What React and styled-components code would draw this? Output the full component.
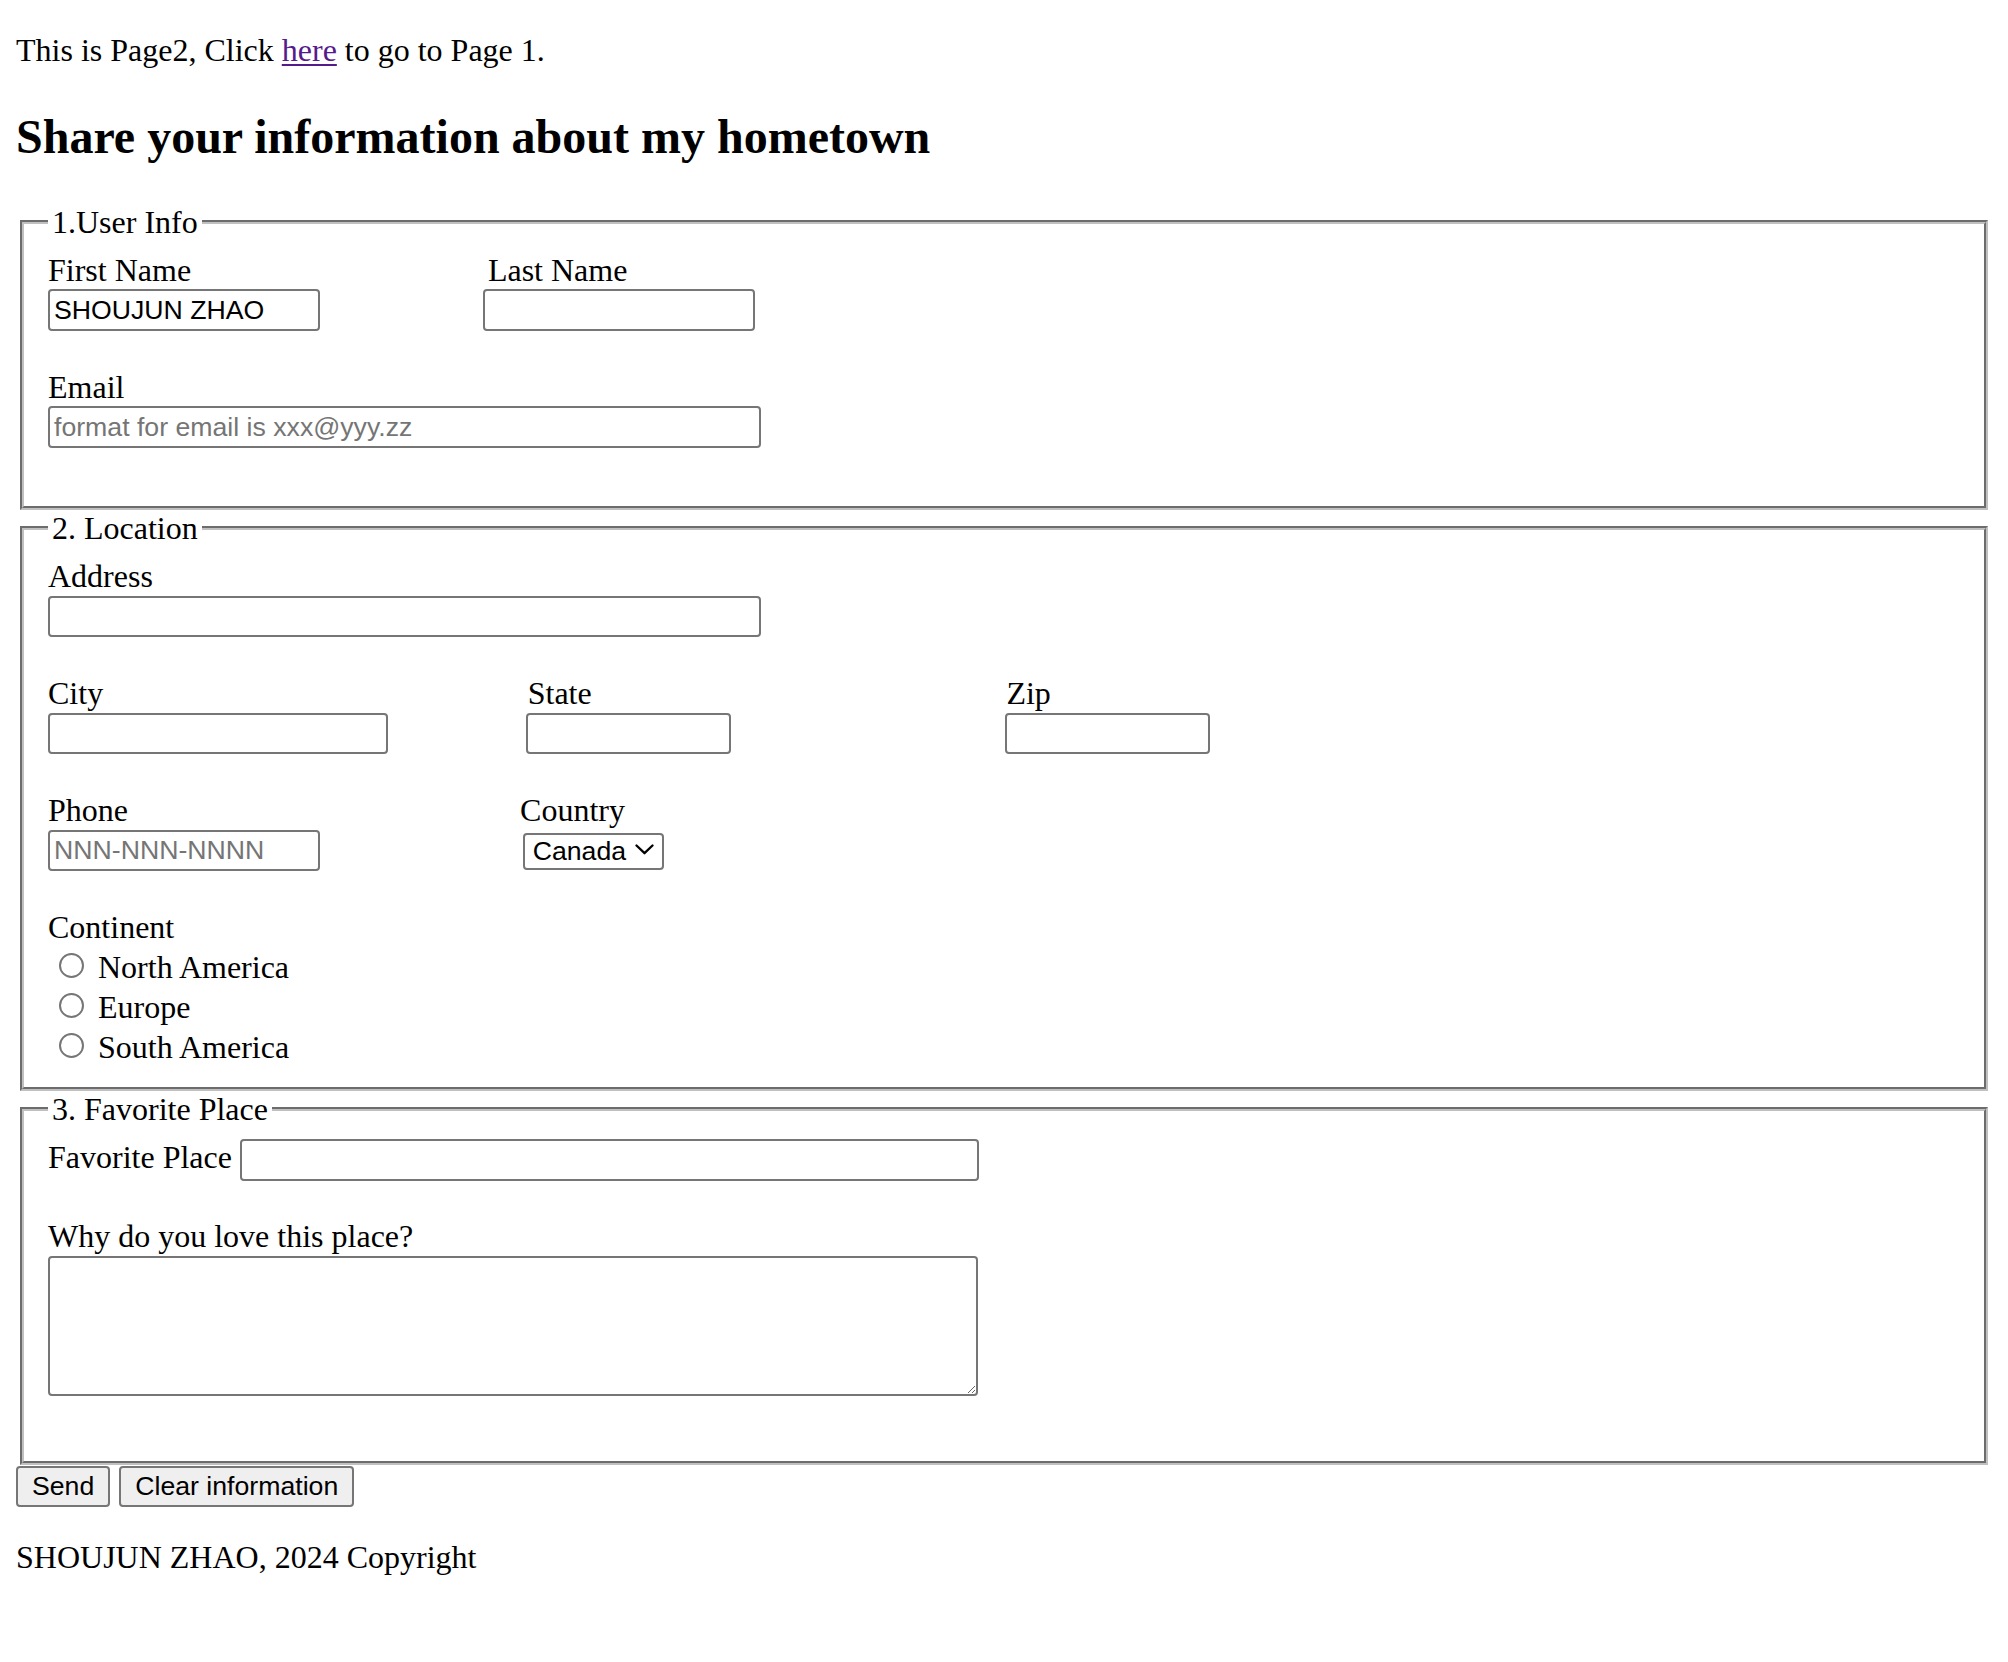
import React from "react";
import styled, { createGlobalStyle } from "styled-components";

const GlobalStyle = createGlobalStyle`
  html, body { background: #ffffff; }
  body {
    margin: 0 16px 16px;
    padding: 0;
    font-family: "Liberation Serif", "Times New Roman", serif;
    font-size: 32px;
    line-height: normal;
    color: #000000;
  }
  * { outline: none; }
`;

const Intro = styled.p`
  margin: 32px 0;
`;

const PageLink = styled.a`
  color: #551a8b;
  text-decoration: underline;
  text-decoration-thickness: 2px;
  text-underline-offset: 3px;
`;

const Title = styled.h2`
  font-size: 48px;
  font-weight: bold;
  margin: 39.84px 0;
`;

const Form = styled.form`
  margin: 0;
`;

const Fieldset = styled.fieldset`
  margin: 0 4px;
  padding: 11.2px 24px ${(p) => p.$padBottom ?? 20}px;
  border: 4px groove rgb(192, 192, 192);
  min-width: min-content;
`;

const Legend = styled.legend`
  padding: 0 4px;
  font-size: 32px;
`;

const Group = styled.div`
  margin-bottom: ${(p) => (p.$gap ?? 38)}px;
`;

const FieldGrid = styled.div`
  display: grid;
  grid-template-columns: ${(p) => p.$columns};
  align-items: start;
`;

const Field = styled.div`
  display: flex;
  flex-direction: column;
  align-items: flex-start;
`;

const FieldLabel = styled.label`
  display: block;
  margin-left: ${(p) => p.$shift || 0}px;
  white-space: nowrap;
`;

const controlFont = `
  font-family: "Liberation Sans", Arial, sans-serif;
  font-size: 26.67px;
  color: #000000;
`;

const TextInput = styled.input`
  box-sizing: border-box;
  display: block;
  width: ${(p) => p.$w}px;
  height: 41.5px;
  margin: 0.5px 0 0;
  padding: 0 4px;
  border: 2px solid #767676;
  border-radius: 4px;
  background: #ffffff;
  ${controlFont}
  &::placeholder {
    color: #757575;
    opacity: 1;
  }
`;

const SelectWrap = styled.div`
  position: relative;
  margin-top: 2.2px;
  width: 141px;
  height: 36.6px;
`;

const Select = styled.select`
  appearance: none;
  box-sizing: border-box;
  width: 141px;
  height: 36.6px;
  margin: 0;
  padding: 0 0 0 8px;
  border: 2px solid #767676;
  border-radius: 4px;
  background: #ffffff;
  ${controlFont}
`;

const Chevron = styled.svg`
  position: absolute;
  left: 112px;
  top: 13px;
  width: 19px;
  height: 11px;
  pointer-events: none;
`;

const RadioList = styled.div`
  display: flex;
  flex-direction: column;
`;

const RadioRow = styled.label`
  display: flex;
  align-items: flex-start;
  height: 40px;
`;

const Radio = styled.input`
  appearance: none;
  flex: none;
  box-sizing: border-box;
  width: 25px;
  height: 25px;
  margin: 6.5px 14.5px 0 10.5px;
  border: 2px solid #767676;
  border-radius: 50%;
  background: #ffffff;
  &:checked {
    border-color: #0075ff;
    box-shadow: inset 0 0 0 4px #ffffff;
    background: #0075ff;
  }
`;

const RadioText = styled.span`
  margin-top: 2.8px;
  white-space: nowrap;
`;

const InlineRow = styled.div`
  display: flex;
  align-items: flex-start;
  margin-bottom: 37px;
`;

const InlineLabel = styled.label`
  margin-right: 8px;
  white-space: nowrap;
`;

const TextArea = styled.textarea`
  box-sizing: border-box;
  display: block;
  width: 930px;
  height: 139.5px;
  margin: 1.3px 0 0;
  padding: 4px;
  border: 2px solid #767676;
  border-radius: 4px;
  background: #ffffff;
  resize: both;
  ${controlFont}
`;

const Tail = styled.div`
  height: ${(p) => p.$h}px;
`;

const ButtonBar = styled.div`
  display: flex;
  gap: 9px;
  margin-top: 1px;
`;

const Button = styled.button`
  box-sizing: border-box;
  height: 41px;
  margin: 0;
  padding: 0 14px;
  border: 2px solid #767676;
  border-radius: 4px;
  background: #efefef;
  ${controlFont}
  white-space: nowrap;
`;

const Footer = styled.p`
  margin: 32px 0;
`;

export default function App() {
  return (
    <>
      <GlobalStyle />
      <Intro>
        This is Page2, Click <PageLink href="#page1">here</PageLink> to go to Page 1.
      </Intro>
      <Title>Share your information about my hometown</Title>
      <Form onSubmit={(e) => e.preventDefault()}>
        <Fieldset>
          <Legend>1.User Info</Legend>
          <Group>
            <FieldGrid $columns="434.7px auto">
              <Field>
                <FieldLabel htmlFor="fname">First Name</FieldLabel>
                <TextInput id="fname" type="text" $w={272} defaultValue="SHOUJUN ZHAO" />
              </Field>
              <Field>
                <FieldLabel htmlFor="lname" $shift={5.2}>Last Name</FieldLabel>
                <TextInput id="lname" type="text" $w={272} />
              </Field>
            </FieldGrid>
          </Group>
          <Group>
            <Field>
              <FieldLabel htmlFor="email">Email</FieldLabel>
              <TextInput id="email" type="email" $w={713} placeholder="format for email is xxx@yyy.zz" />
            </Field>
          </Group>
        </Fieldset>

        <Fieldset $padBottom={20.5}>
          <Legend>2. Location</Legend>
          <Group>
            <Field>
              <FieldLabel htmlFor="address">Address</FieldLabel>
              <TextInput id="address" type="text" $w={713} />
            </Field>
          </Group>
          <Group>
            <FieldGrid $columns="477.7px 479px auto">
              <Field>
                <FieldLabel htmlFor="city">City</FieldLabel>
                <TextInput id="city" type="text" $w={340} />
              </Field>
              <Field>
                <FieldLabel htmlFor="state" $shift={2}>State</FieldLabel>
                <TextInput id="state" type="text" $w={205} />
              </Field>
              <Field>
                <FieldLabel htmlFor="zip" $shift={1.7}>Zip</FieldLabel>
                <TextInput id="zip" type="text" $w={205} />
              </Field>
            </FieldGrid>
          </Group>
          <Group $gap={38}>
            <FieldGrid $columns="474.7px auto">
              <Field>
                <FieldLabel htmlFor="phone">Phone</FieldLabel>
                <TextInput id="phone" type="tel" $w={272} placeholder="NNN-NNN-NNNN" />
              </Field>
              <Field>
                <FieldLabel htmlFor="country" $shift={-2.6}>Country</FieldLabel>
                <SelectWrap>
                  <Select id="country" defaultValue="Canada">
                    <option value="Canada">Canada</option>
                    <option value="USA">USA</option>
                    <option value="Mexico">Mexico</option>
                  </Select>
                  <Chevron viewBox="0 0 19 11" aria-hidden="true">
                    <path d="M1.5 1.5 L9.5 9.2 L17.5 1.5" fill="none" stroke="#000" strokeWidth="2.3" strokeLinecap="round" strokeLinejoin="round" />
                  </Chevron>
                </SelectWrap>
              </Field>
            </FieldGrid>
          </Group>
          <Group $gap={0}>
            <FieldLabel as="div">Continent</FieldLabel>
            <RadioList>
              {["North America", "Europe", "South America"].map((c) => (
                <RadioRow key={c}>
                  <Radio type="radio" name="continent" value={c} />
                  <RadioText>{c}</RadioText>
                </RadioRow>
              ))}
            </RadioList>
          </Group>
        </Fieldset>

        <Fieldset>
          <Legend>3. Favorite Place</Legend>
          <InlineRow>
            <InlineLabel htmlFor="place">Favorite Place</InlineLabel>
            <TextInput id="place" type="text" $w={739} />
          </InlineRow>
          <Field>
            <FieldLabel htmlFor="why">Why do you love this place?</FieldLabel>
            <TextArea id="why" />
          </Field>
          <Tail $h={45.5} />
        </Fieldset>

        <ButtonBar>
          <Button type="submit">Send</Button>
          <Button type="reset">Clear information</Button>
        </ButtonBar>
      </Form>
      <Footer>SHOUJUN ZHAO, 2024 Copyright</Footer>
    </>
  );
}
